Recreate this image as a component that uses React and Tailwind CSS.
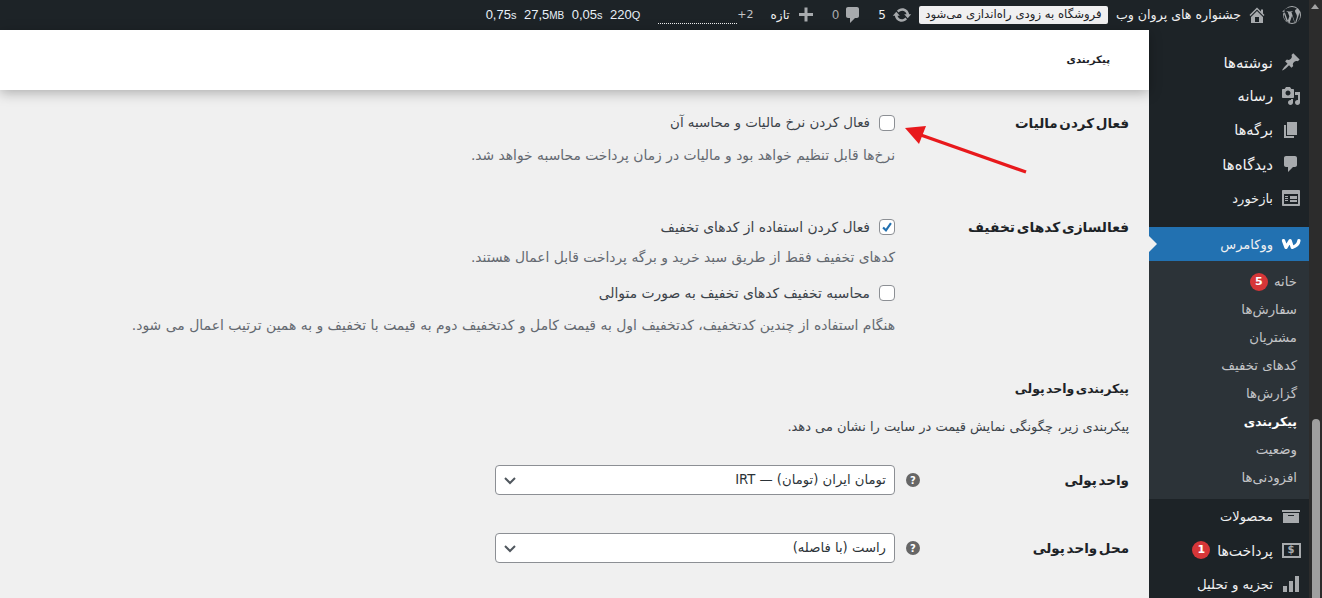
import React from "react";

const font = "font-['Tahoma','DejaVu_Sans',sans-serif]";

function Dash({ d, size = 20, className = "" }) {
  return (
    <svg viewBox="0 0 20 20" width={size} height={size} fill="currentColor" className={className}>
      <path d={d} />
    </svg>
  );
}

const P = {
  post: "M10.44 3.02l1.82-1.82 6.36 6.35-1.83 1.82c-1.05-.68-2.48-.57-3.41.36l-.75.75c-.92.93-1.04 2.35-.35 3.41l-1.83 1.82-2.41-2.41-2.8 2.79c-.42.42-3.38 2.71-3.8 2.29s1.86-3.39 2.28-3.81l2.79-2.79L4.1 9.36l1.83-1.82c1.05.69 2.48.57 3.4-.36l.75-.75c.93-.92 1.05-2.35.36-3.41z",
  media: "M13 11V4c0-.55-.45-1-1-1h-1.67L9 1H5L3.67 3H2c-.55 0-1 .45-1 1v7c0 .55.45 1 1 1h10c.55 0 1-.45 1-1zM7 4.5c1.38 0 2.5 1.12 2.5 2.5S8.38 9.5 7 9.5 4.5 8.38 4.5 7 5.62 4.5 7 4.5zM14 6h5v10.5c0 1.38-1.12 2.5-2.5 2.5S14 17.88 14 16.5s1.12-2.5 2.5-2.5c.17 0 .34.02.5.05V9h-3V6zm-4 8.05V13h2v3.5c0 1.38-1.12 2.5-2.5 2.5S7 17.88 7 16.5 8.12 14 9.5 14c.17 0 .34.02.5.05z",
  page: "M6 15V2h10v13H6zm-1 1h8v2H3V5h2v11z",
  comment: "M5 2h9c1.1 0 2 .9 2 2v7c0 1.1-.9 2-2 2h-2l-5 5v-5H5c-1.1 0-2-.9-2-2V4c0-1.1.9-2 2-2z",
  feedback: "M2 2h16c.55 0 1 .45 1 1v14c0 .55-.45 1-1 1H2c-.55 0-1-.45-1-1V3c0-.55.45-1 1-1zm15 14V6H3v10h14zM4 8v1h3V8H4zm5 0v3h7V8H9zm-5 2v1h3v-1H4zm0 2v1h3v-1H4zm5 0v2h7v-2H9z",
  archive: "M19 4v2H1V4h18zM2 7h16v10H2V7zm11 3V9H7v1h6z",
  chart: "M18 18V2h-4v16h4zm-6 0V7H8v11h4zm-6 0v-6H2v6h4z",
  home: "M16 8.5l1.53 1.53-1.06 1.06L10 4.62l-6.47 6.47-1.06-1.06L10 2.5l4 4v-2h2v4zm-6-2.46l6 5.99V18H4v-5.97zM12 17v-5H8v5h4z",
  plus: "M17 8v3h-5.5v5.5h-3V11H3V8h5.5V2.5h3V8H17z",
  update: "M10.2 3.28c3.53 0 6.43 2.61 6.92 6h2.08l-3.5 4-3.5-4h2.32c-.45-1.97-2.21-3.45-4.32-3.45-1.45 0-2.73.71-3.54 1.78L4.95 5.66C6.23 4.2 8.11 3.28 10.2 3.28zm-.4 13.44c-3.52 0-6.43-2.61-6.92-6H.8l3.5-4c1.17 1.33 2.33 2.67 3.5 4H5.48c.45 1.97 2.21 3.45 4.32 3.45 1.45 0 2.73-.71 3.54-1.78l1.71 1.95c-1.28 1.46-3.15 2.38-5.25 2.38z",
  wp: "M10 1a9 9 0 1 0 0 18 9 9 0 0 0 0-18zm0 1c1.9 0 3.7.7 5 1.9-1.2 0-2 1-2 2 0 .9.5 1.6 1 2.5.4.7.9 1.6.9 2.9 0 .9-.3 1.9-.8 3.3l-1 3.3-3.7-10.9.9-.1c.4 0 .4-.6 0-.6l-2.7.1-2.7-.1c-.4 0-.4.6 0 .6l.8.1 1.6 4.3-2.2 6.6-3.7-10.9.9-.1c.4 0 .4-.6 0-.6l-2.3.1C4.3 3.3 7 2 10 2zM2.7 7l4 11a8 8 0 0 1-4-11zm7.4 3.7l2.4 6.7.1.1a8 8 0 0 1-4.9.1l2.4-6.9zm7-3.3a8 8 0 0 1-3 10.5l2.4-7c.5-1.2.6-2.1.6-2.9v-.6z",
};

function Item({ icon, iconEl, label, badge, text = "text-[13px]", active }) {
  return (
    <div className={`relative flex items-center h-[34px] ${active ? "bg-[#2271b1]" : ""} text-[#f0f0f1]`}>
      <span className={`w-[36px] shrink-0 flex justify-center ${active ? "text-white" : "text-[#a7aaad]"}`}>
        {iconEl || <Dash d={icon} />}
      </span>
      <span className={`${text} relative top-[1px]`}>{label}</span>
      {badge && (
        <span className="mr-[7px] w-[18px] h-[18px] rounded-full bg-[#d63638] text-white text-[11px] font-bold flex items-center justify-center">
          {badge}
        </span>
      )}
      {active && (
        <span className="absolute left-0 top-[9px] w-0 h-0 border-y-[8px] border-y-transparent border-l-[8px] border-l-[#f0f0f0]" />
      )}
    </div>
  );
}

function Sub({ label, badge, bold }) {
  return (
    <div className={`flex items-center pr-3 h-[28px] ${bold ? "text-[12.5px] font-bold text-white" : "text-[13.3px] text-[#c3c4c7]"}`}>
      <span>{label}</span>
      {badge && (
        <span className="mr-[6px] w-[18px] h-[18px] rounded-full bg-[#d63638] text-white text-[11px] font-bold flex items-center justify-center">
          {badge}
        </span>
      )}
    </div>
  );
}

function Check({ checked }) {
  return (
    <span className="w-[16px] h-[16px] rounded-[4px] border border-[#8c8f94] bg-white shrink-0 flex items-center justify-center">
      {checked && (
        <svg viewBox="0 0 16 16" width="16" height="16">
          <path d="M3.5 8.5 L6.8 11.8 L12.5 3.5" fill="none" stroke="#2271b1" strokeWidth="2.4" />
        </svg>
      )}
    </span>
  );
}

function CheckLine({ checked, children, mt, text = "text-[13.85px]" }) {
  return (
    <div className={`flex items-center h-[20px] gap-[9px] ${text} text-[#3c434a] ${mt}`}>
      <Check checked={checked} />
      <span>{children}</span>
    </div>
  );
}

function Desc({ children, mt, text = "text-[13.85px]" }) {
  return <div className={`h-[20px] flex items-center ${text} text-[#646970] ${mt}`}>{children}</div>;
}

function SelectRow({ label, value, mt }) {
  return (
    <div className={`flex items-center h-[30px] ${mt}`}>
      <div className="w-[209px] text-[13.5px] [word-spacing:-3px] font-bold text-[#1d2327] shrink-0">{label}</div>
      <div className="w-[25px] shrink-0 flex">
        <span className="w-[14px] h-[14px] rounded-full bg-[#666666] text-white text-[10px] font-bold flex items-center justify-center">?</span>
      </div>
      <div className="w-[400px] h-[30px] rounded-[4px] border border-[#8c8f94] bg-white flex items-center justify-between pr-[8px] pl-[6px] text-[13.2px] text-[#2c3338]">
        <span>{value}</span>
        <svg viewBox="0 0 16 16" width="16" height="16" fill="none" stroke="#50575e" strokeWidth="2">
          <path d="M3 6 L8 11 L13 6" />
        </svg>
      </div>
    </div>
  );
}

export default function App() {
  return (
    <div dir="ltr" className={`flex w-[1322px] h-[598px] overflow-hidden bg-[#f0f0f0] ${font}`}>
      <div className="flex-1 flex flex-col min-w-0">
        {/* admin bar */}
        <div dir="rtl" className="h-[30px] shrink-0 bg-[#1d2327] flex items-center text-[#f0f0f1] text-[12px] pr-[7px]">
          <Dash d={P.wp} size={20} className="text-[#a7aaad]" />
          <Dash d={P.home} size={20} className="text-[#a7aaad] mr-[15px]" />
          <span className="mr-[6px] text-[12.6px]">جشنواره های پروان وب</span>
          <span className="mr-[8px] bg-[#f0f0f1] text-[#1d2327] rounded-[2px] h-[18px] w-[189px] flex items-center justify-center text-[11.7px] whitespace-nowrap">
            فروشگاه به زودی راه‌اندازی می‌شود
          </span>
          <Dash d={P.update} size={20} className="text-[#a7aaad] mr-[7px]" />
          <span className="mr-[6px]">5</span>
          <Dash d={P.comment} size={20} className="text-[#a7aaad] mr-[15px]" />
          <span className="mr-[4px] text-[#a7aaad]">0</span>
          <Dash d={P.plus} size={20} className="text-[#a7aaad] mr-[16px]" />
          <span className="mr-[6px]">تازه</span>
          <span className="mr-[17px] text-[11px] text-[#c3c4c7]" dir="ltr">+2</span>
          <span className="relative w-[79px] h-[30px]">
            <span className="absolute bottom-[6px] left-0 right-0 border-b border-dotted border-[#f0f0f1]" />
          </span>
          <span dir="ltr" className="mr-[18px] flex gap-[7.5px] font-['Liberation_Sans','DejaVu_Sans',sans-serif] text-[13px] text-[#e8f0f8]">
            <span>0,75<span className="text-[11px]">s</span></span>
            <span>27,5<span className="text-[10px]">MB</span></span>
            <span>0,05<span className="text-[11px]">s</span></span>
            <span>220<span className="text-[11px]">Q</span></span>
          </span>
        </div>

        <div className="flex-1 flex min-h-0">
          {/* content */}
          <div dir="rtl" className="relative flex-1 min-w-0 bg-[#f0f0f0]">
            <div className="h-[60px] bg-white pr-[39px] flex items-center text-[10.2px] font-bold text-[#1d2327] shadow-[0_3px_12px_rgba(0,0,0,0.28)]">
              پیکربندی
            </div>
            <div className="pr-[20px] pt-[23px]">
              <div className="flex">
                <div className="w-[234px] shrink-0 h-[20px] flex items-center text-[13.5px] [word-spacing:-3px] font-bold text-[#1d2327]">فعال کردن مالیات</div>
                <div>
                  <CheckLine text="text-[13.4px]">فعال کردن نرخ مالیات و محاسبه آن</CheckLine>
                  <Desc mt="mt-[12px]">نرخ‌ها قابل تنظیم خواهد بود و مالیات در زمان پرداخت محاسبه خواهد شد.</Desc>
                </div>
              </div>
              <div className="flex mt-[52px]">
                <div className="w-[234px] shrink-0 h-[20px] flex items-center text-[13.8px] [word-spacing:-3px] font-bold text-[#1d2327]">فعالسازی کدهای تخفیف</div>
                <div>
                  <CheckLine checked>فعال کردن استفاده از کدهای تخفیف</CheckLine>
                  <Desc mt="mt-[10px]">کدهای تخفیف فقط از طریق سبد خرید و برگه پرداخت قابل اعمال هستند.</Desc>
                  <CheckLine mt="mt-[16px]">محاسبه تخفیف کدهای تخفیف به صورت متوالی</CheckLine>
                  <Desc mt="mt-[12px]" text="text-[13.95px]">هنگام استفاده از چندین کدتخفیف، کدتخفیف اول به قیمت کامل و کدتخفیف دوم به قیمت با تخفیف و به همین ترتیب اعمال می شود.</Desc>
                </div>
              </div>
              <div className="mt-[44px] h-[20px] flex items-center text-[12.5px] [word-spacing:-3px] font-bold text-[#1d2327]">پیکربندی واحد پولی</div>
              <div className="mt-[18px] h-[20px] flex items-center text-[13px] text-[#3c434a]">پیکربندی زیر، چگونگی نمایش قیمت در سایت را نشان می دهد.</div>
              <SelectRow mt="mt-[28px]" label="واحد پولی" value="تومان ایران (تومان) — IRT" />
              <SelectRow mt="mt-[38px]" label="محل واحد پولی" value="راست (با فاصله)" />
            </div>
            {/* annotation arrow */}
            <svg className="absolute left-[895px] top-[85px]" width="140" height="60" viewBox="895 115 140 60">
              <line x1="1026" y1="172" x2="918" y2="134" stroke="#e8191c" strokeWidth="3.4" />
              <polygon points="905,128 926,126 919,144" fill="#e8191c" />
            </svg>
          </div>

          {/* sidebar */}
          <div dir="rtl" className="w-[160px] shrink-0 bg-[#1d2327] pt-[15px]">
            <Item icon={P.post} label="نوشته‌ها" text="text-[15px]" />
            <Item icon={P.media} label="رسانه" text="text-[14.5px]" />
            <Item icon={P.page} label="برگه‌ها" text="text-[14.5px]" />
            <Item icon={P.comment} label="دیدگاه‌ها" text="text-[15px]" />
            <Item icon={P.feedback} label="بازخورد" />
            <div className="h-[12px]" />
            <Item
              active
              label="ووکامرس"
              iconEl={
                <svg viewBox="0 0 24 14" width="20" height="12" fill="none" stroke="currentColor" strokeWidth="4" strokeLinecap="round" strokeLinejoin="round">
                  <path d="M3 3 L6 11 L11 3 L13.5 11 C17 10 21 7 21.5 3" />
                </svg>
              }
            />
            <div className="bg-[#2c3338] pt-[7px] pb-[5px] h-[238px]">
              <Sub label="خانه" badge="5" />
              <Sub label="سفارش‌ها" />
              <Sub label="مشتریان" />
              <Sub label="کدهای تخفیف" />
              <Sub label="گزارش‌ها" />
              <Sub label="پیکربندی" bold />
              <Sub label="وضعیت" />
              <Sub label="افزودنی‌ها" />
            </div>
            <Item icon={P.archive} label="محصولات" />
            <Item
              label="پرداخت‌ها"
              badge="1"
              text="text-[14px]"
              iconEl={
                <span className="w-[19px] h-[15px] border-2 border-[#a7aaad] flex items-center justify-center text-[10px] font-bold leading-none">$</span>
              }
            />
            <Item icon={P.chart} label="تجزیه و تحلیل" text="text-[13.3px]" />
          </div>
        </div>
      </div>

      {/* page scrollbar */}
      <div className="relative w-[13px] shrink-0 bg-[#2c2c2c]">
        <span className="absolute top-[4px] left-[2px] w-0 h-0 border-x-[4.5px] border-x-transparent border-b-[5px] border-b-[#a3a3a3]" />
        <span className="absolute top-[419px] bottom-0 left-[3px] w-[8px] rounded-t-[4px] bg-[#9f9f9f]" />
      </div>
    </div>
  );
}
